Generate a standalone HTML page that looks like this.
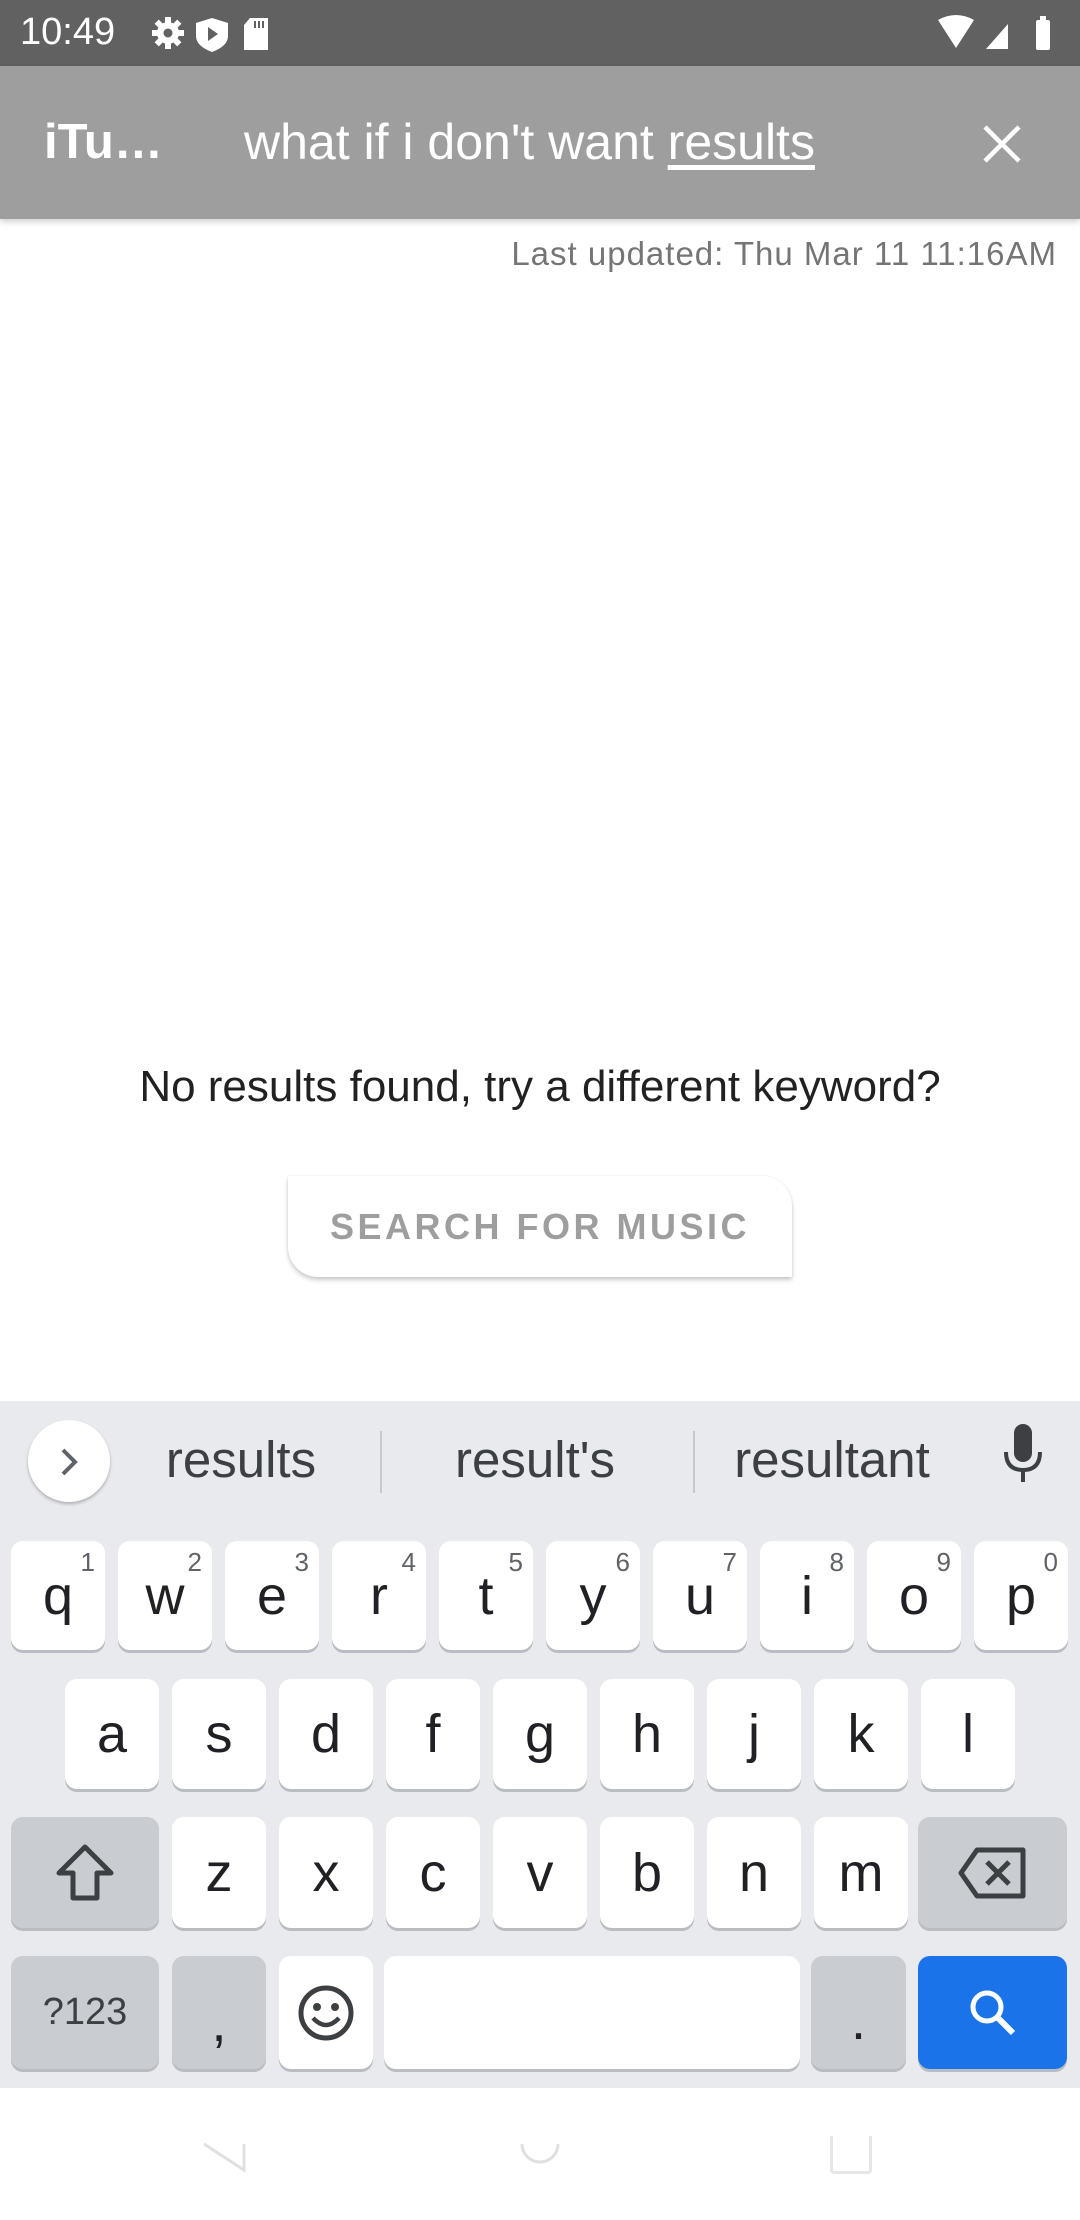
<!DOCTYPE html>
<html><head><meta charset="utf-8"><style>
*{margin:0;padding:0;box-sizing:border-box}
body{width:1080px;height:2220px;position:relative;overflow:hidden;background:#fff;font-family:"Liberation Sans",sans-serif}
.abs{position:absolute}
.key{position:absolute;background:#fff;border-radius:12px;box-shadow:0 3px 0 #b9bcc1;display:flex;align-items:center;justify-content:center;font-size:54px;color:#202124}
.key.g{background:#c9ccd1}
.key sup{position:absolute;top:6px;right:10px;font-size:26px;color:#5f6368}
.sug{position:absolute;top:1430px;font-size:51px;color:#3c4043;transform:translateX(-50%)}
</style></head><body>
<div class="abs" style="left:0;top:0;width:1080px;height:66px;background:#616161"></div>
<div class="abs" style="left:20px;top:11px;font-size:38px;color:#fff">10:49</div>
<svg class="abs" style="left:148px;top:14px" width="150" height="40" viewBox="0 0 150 40">
<g fill="#fff"><rect x="17" y="3" width="6" height="32"/><rect x="4" y="16" width="32" height="6"/><rect x="17" y="3" width="6" height="32" transform="rotate(45 20 19)"/><rect x="17" y="3" width="6" height="32" transform="rotate(-45 20 19)"/></g>
<circle cx="20" cy="19" r="11" fill="#fff"/>
<circle cx="20" cy="19" r="4.5" fill="#616161"/>
<path d="M64 4 L80 9 V22 Q80 32 64 38 Q48 32 48 22 V9 Z" fill="#fff"/><path d="M60 13 L70 20 L60 27 Z" fill="#616161"/>
<path d="M102 4 H120 V36 H96 V11 Z" fill="#fff"/><rect x="106" y="7" width="2" height="7" fill="#616161"/><rect x="110" y="7" width="2" height="7" fill="#616161"/><rect x="114" y="7" width="2" height="7" fill="#616161"/>
</svg>
<svg class="abs" style="left:936px;top:14px" width="130" height="40" viewBox="0 0 130 40">
<path d="M2 6 Q20 -4 38 6 L20 34 Z" fill="#fff"/>
<path d="M50 35 L72 10 V35 Z" fill="#fff"/>
<rect x="100" y="6" width="14" height="30" rx="2" fill="#fff"/><rect x="104" y="2" width="6" height="5" fill="#fff"/>
</svg>
<div class="abs" style="left:0;top:66px;width:1080px;height:153px;background:#9e9e9e;box-shadow:0 3px 6px rgba(0,0,0,.18)"></div>
<div class="abs" style="left:44px;top:114px;font-size:49px;font-weight:bold;color:#fff">iTu…</div>
<div class="abs" style="left:244px;top:113px;font-size:50px;color:#fff">what if i don't want <span style="text-decoration:underline;text-underline-offset:6px">results</span></div>
<svg class="abs" style="left:982px;top:124px" width="40" height="40" viewBox="0 0 40 40"><path d="M3 3 L37 37 M37 3 L3 37" stroke="#fff" stroke-width="4.5"/></svg>
<div class="abs" style="right:23px;top:235px;font-size:33px;color:#757575;letter-spacing:1px">Last updated: Thu Mar 11 11:16AM</div>
<div class="abs" style="left:0;width:1080px;top:1062px;text-align:center;font-size:44px;color:#212121">No results found, try a different keyword?</div>
<div class="abs" style="left:288px;top:1176px;width:504px;height:101px;background:#fff;border-radius:0 30px 0 30px;box-shadow:0 3px 5px rgba(0,0,0,.2),0 0 2px rgba(0,0,0,.08);display:flex;align-items:center;justify-content:center;font-size:36px;font-weight:bold;color:#9e9e9e;letter-spacing:3.5px">SEARCH FOR MUSIC</div>
<div class="abs" style="left:0;top:1401px;width:1080px;height:687px;background:#e8eaed"></div>
<div class="abs" style="left:28px;top:1420px;width:82px;height:82px;border-radius:50%;background:#fff;box-shadow:0 2px 3px rgba(0,0,0,.25)"></div>
<svg class="abs" style="left:56px;top:1446px" width="26" height="32" viewBox="0 0 26 32"><path d="M7 4 L19 16 L7 28" stroke="#5f6368" stroke-width="4" fill="none"/></svg>
<div class="sug" style="left:241px">results</div>
<div class="sug" style="left:535px">result's</div>
<div class="sug" style="left:832px">resultant</div>
<div class="abs" style="left:380px;top:1431px;width:2px;height:62px;background:#c7c9cc"></div>
<div class="abs" style="left:693px;top:1431px;width:2px;height:62px;background:#c7c9cc"></div>
<svg class="abs" style="left:1000px;top:1422px" width="46" height="70" viewBox="0 0 46 70"><rect x="14" y="2" width="18" height="38" rx="9" fill="#3c4043"/><path d="M6 30 Q6 48 23 48 Q40 48 40 30" stroke="#3c4043" stroke-width="4" fill="none"/><rect x="21" y="48" width="4" height="12" fill="#3c4043"/></svg>

<div class="key" style="left:11px;top:1541px;width:94px;height:109px">q<sup>1</sup></div>
<div class="key" style="left:118px;top:1541px;width:94px;height:109px">w<sup>2</sup></div>
<div class="key" style="left:225px;top:1541px;width:94px;height:109px">e<sup>3</sup></div>
<div class="key" style="left:332px;top:1541px;width:94px;height:109px">r<sup>4</sup></div>
<div class="key" style="left:439px;top:1541px;width:94px;height:109px">t<sup>5</sup></div>
<div class="key" style="left:546px;top:1541px;width:94px;height:109px">y<sup>6</sup></div>
<div class="key" style="left:653px;top:1541px;width:94px;height:109px">u<sup>7</sup></div>
<div class="key" style="left:760px;top:1541px;width:94px;height:109px">i<sup>8</sup></div>
<div class="key" style="left:867px;top:1541px;width:94px;height:109px">o<sup>9</sup></div>
<div class="key" style="left:974px;top:1541px;width:94px;height:109px">p<sup>0</sup></div>

<div class="key" style="left:65px;top:1679px;width:94px;height:110px">a</div>
<div class="key" style="left:172px;top:1679px;width:94px;height:110px">s</div>
<div class="key" style="left:279px;top:1679px;width:94px;height:110px">d</div>
<div class="key" style="left:386px;top:1679px;width:94px;height:110px">f</div>
<div class="key" style="left:493px;top:1679px;width:94px;height:110px">g</div>
<div class="key" style="left:600px;top:1679px;width:94px;height:110px">h</div>
<div class="key" style="left:707px;top:1679px;width:94px;height:110px">j</div>
<div class="key" style="left:814px;top:1679px;width:94px;height:110px">k</div>
<div class="key" style="left:921px;top:1679px;width:94px;height:110px">l</div>

<div class="key g" style="left:11px;top:1817px;width:148px;height:111px"><svg width="64" height="60" viewBox="0 0 64 60"><path d="M32 4 L58 30 H44 V55 H20 V30 H6 Z" stroke="#3c4043" stroke-width="5" fill="none" stroke-linejoin="round"/></svg></div>
<div class="key" style="left:172px;top:1817px;width:94px;height:111px">z</div>
<div class="key" style="left:279px;top:1817px;width:94px;height:111px">x</div>
<div class="key" style="left:386px;top:1817px;width:94px;height:111px">c</div>
<div class="key" style="left:493px;top:1817px;width:94px;height:111px">v</div>
<div class="key" style="left:600px;top:1817px;width:94px;height:111px">b</div>
<div class="key" style="left:707px;top:1817px;width:94px;height:111px">n</div>
<div class="key" style="left:814px;top:1817px;width:94px;height:111px">m</div>
<div class="key g" style="left:918px;top:1817px;width:149px;height:111px"><svg width="72" height="54" viewBox="0 0 72 54"><path d="M20 4 H66 V50 H20 L4 27 Z" stroke="#3c4043" stroke-width="5" fill="none" stroke-linejoin="round"/><path d="M30 16 L52 38 M52 16 L30 38" stroke="#3c4043" stroke-width="5"/></svg></div>

<div class="key g" style="left:11px;top:1956px;width:148px;height:113px;font-size:38px;color:#3c4043">?123</div>
<div class="key g" style="left:172px;top:1956px;width:94px;height:113px;padding-top:20px">,</div>
<div class="key" style="left:279px;top:1956px;width:94px;height:113px"><svg width="58" height="58" viewBox="0 0 58 58"><circle cx="29" cy="29" r="25" stroke="#3c4043" stroke-width="5" fill="none"/><circle cx="20" cy="23" r="4" fill="#3c4043"/><circle cx="38" cy="23" r="4" fill="#3c4043"/><path d="M16 34 Q29 48 42 34" stroke="#3c4043" stroke-width="4.5" fill="none"/></svg></div>
<div class="key" style="left:384px;top:1956px;width:416px;height:113px"></div>
<div class="key g" style="left:811px;top:1956px;width:95px;height:113px;padding-top:16px">.</div>
<div class="key" style="left:918px;top:1956px;width:149px;height:113px;background:#1a73e8;box-shadow:0 3px 0 #b9bcc1"><svg width="52" height="52" viewBox="0 0 52 52"><circle cx="20" cy="20" r="14" stroke="#fff" stroke-width="5" fill="none"/><path d="M30 30 L46 46" stroke="#fff" stroke-width="6"/></svg></div>

<div class="abs" style="left:0;top:2088px;width:1080px;height:132px;background:#fff"></div>
<svg class="abs" style="left:200px;top:2140px" width="50" height="40" viewBox="0 0 50 40"><path d="M4 4 L44 30 V4" fill="none" stroke="#e0e0e0" stroke-width="3"/></svg>
<svg class="abs" style="left:518px;top:2140px" width="44" height="40" viewBox="0 0 44 40"><path d="M4 4 A18 18 0 0 0 40 4" fill="none" stroke="#e0e0e0" stroke-width="3"/></svg>
<div class="abs" style="left:830px;top:2136px;width:42px;height:38px;border:3px solid #e6e6e6;border-top:none;border-radius:0 0 4px 4px"></div>
</body></html>
